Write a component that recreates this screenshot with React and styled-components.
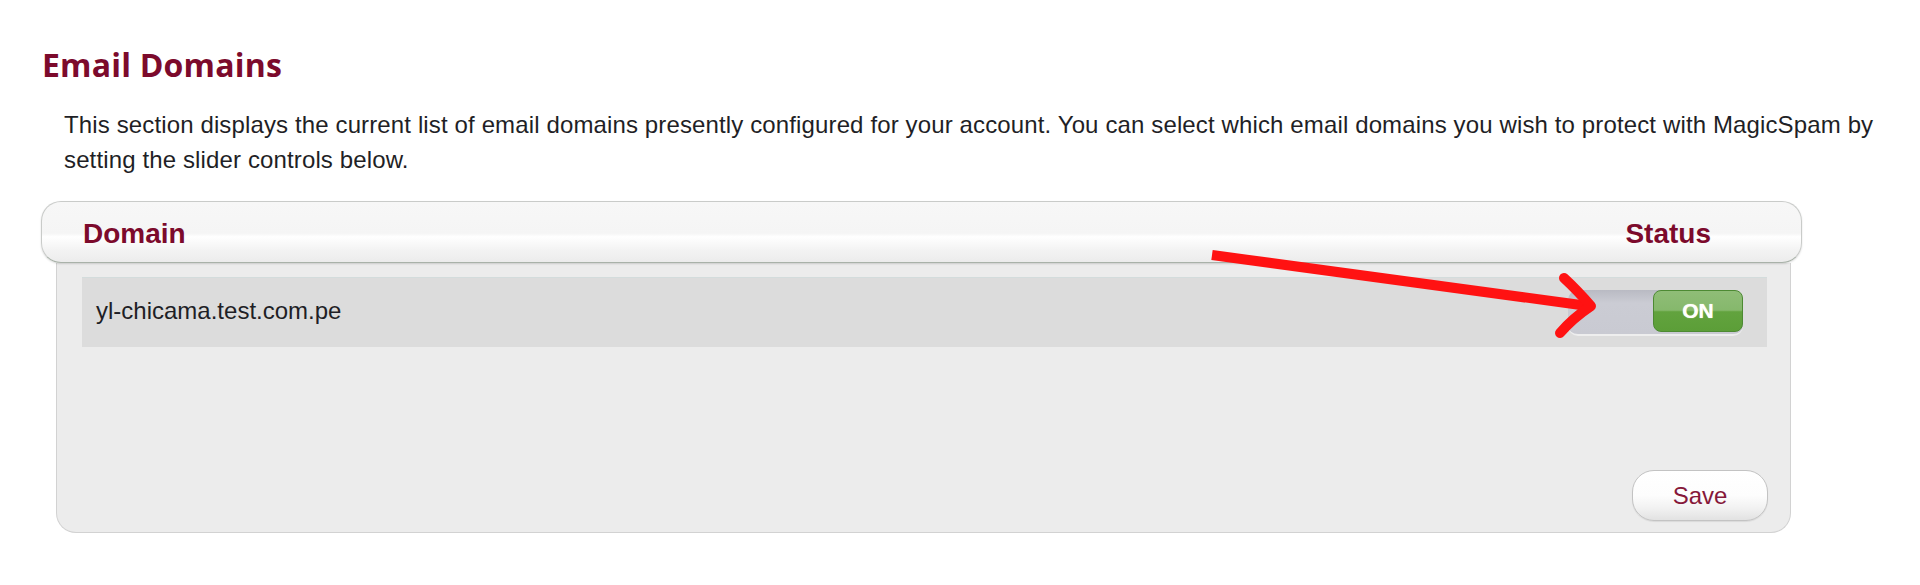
import React from 'react';
import styled, { createGlobalStyle } from 'styled-components';

const maroon = '#7c0a2c';
const ink = '#1f1f26';

const GlobalStyle = createGlobalStyle`
  html, body {
    margin: 0;
    padding: 0;
    background: #ffffff;
  }
  body {
    font-family: "Liberation Sans", Arial, sans-serif;
  }
`;

const Page = styled.div`
  position: relative;
  width: 1920px;
  height: 585px;
  box-sizing: border-box;
  padding: 46px 0 0 41px;
  overflow: hidden;
`;

const Title = styled.h2`
  margin: 0 0 0 1px;
  font-family: "Open Sans", "Noto Sans", sans-serif;
  font-weight: 700;
  font-size: 32px;
  line-height: 37px;
  letter-spacing: 0.2px;
  color: ${maroon};
`;

const Intro = styled.p`
  margin: 24px 0 0 23px;
  width: 1850px;
  font-size: 24px;
  line-height: 35px;
  letter-spacing: 0.13px;
  color: ${ink};
`;

const Table = styled.div`
  margin-top: 24px;
  width: 1761px;
`;

const HeaderBar = styled.div`
  height: 62px;
  box-sizing: border-box;
  display: flex;
  align-items: center;
  justify-content: space-between;
  padding: 3px 90px 0 41px;
  border: 1px solid #c9cbc9;
  border-bottom-color: #a9b2a9;
  border-radius: 20px;
  background: linear-gradient(#f7f7f7 0%, #f5f5f5 52%, #ffffff 58%, #f3f3f3 80%, #ececec 100%);
  box-shadow: 0 1px 2px rgba(0, 0, 0, 0.14);
  position: relative;
  z-index: 1;
`;

const HeadCell = styled.span`
  font-size: 28px;
  font-weight: 700;
  color: ${maroon};
`;

const Body = styled.div`
  margin: 0 11px 0 15px;
  height: 270px;
  box-sizing: border-box;
  display: flex;
  flex-direction: column;
  padding: 14px 23px 11px 25px;
  background: #ececec;
  border: 1px solid #d2d2d2;
  border-top: none;
  border-radius: 0 0 20px 20px;
`;

const Row = styled.div`
  height: 70px;
  box-sizing: border-box;
  display: flex;
  align-items: center;
  justify-content: space-between;
  padding: 0 24px 3px 14px;
  background: #dcdcdc;
  border-top: 1px solid #d3dcdc;
`;

const DomainName = styled.span`
  font-size: 24px;
  color: ${ink};
`;

const Track = styled.div`
  width: 175px;
  height: 46px;
  box-sizing: border-box;
  display: flex;
  justify-content: flex-end;
  align-items: center;
  border-radius: 10px;
  background: linear-gradient(#b9bac3 0%, #cbccd4 30%, #c9cad2 100%);
  border-bottom: 2px solid #eeeeee;
  margin-top: 4px;
`;

const Knob = styled.div`
  width: 90px;
  height: 42px;
  box-sizing: border-box;
  display: flex;
  align-items: center;
  justify-content: center;
  border-radius: 8px;
  border: 1px solid #4d8a33;
  background: linear-gradient(#8fbd77 0%, #86b86c 48%, #62a33e 52%, #5c9e38 100%);
  color: #ffffff;
  font-size: 21px;
  font-weight: 700;
  text-shadow: 0 0 1px rgba(255, 255, 210, 0.9);
  margin-top: -2px;
`;

const Footer = styled.div`
  margin-top: auto;
  display: flex;
  justify-content: flex-end;
`;

const SaveButton = styled.button`
  width: 136px;
  height: 51px;
  margin-right: -1px;
  border-radius: 22px;
  border: 1px solid #c3c3c3;
  background: linear-gradient(#ffffff 0%, #fdfdfd 50%, #f2f2f2 75%, #e2e2e2 100%);
  box-shadow: 0 1px 1px rgba(0, 0, 0, 0.08);
  font-family: "Liberation Sans", Arial, sans-serif;
  font-size: 24px;
  color: #86183a;
  padding: 0;
  cursor: pointer;
`;

const Overlay = styled.svg`
  position: absolute;
  left: 0;
  top: 0;
  z-index: 2;
  pointer-events: none;
`;

function Arrow() {
  return (
    <Overlay width="1920" height="585" viewBox="0 0 1920 585">
      <path d="M1212 255 L1588 306" stroke="#ff1212" strokeWidth="10" fill="none" />
      <path
        d="M1564 278 Q1577 290 1591 306 Q1573 318 1560 333"
        stroke="#ff1212"
        strokeWidth="10"
        strokeLinecap="round"
        strokeLinejoin="round"
        fill="none"
      />
    </Overlay>
  );
}

export default function App() {
  return (
    <>
      <GlobalStyle />
      <Page>
        <Title>Email Domains</Title>
        <Intro>
          This section displays the current list of email domains presently configured for your account. You can select which email domains you wish to protect with MagicSpam by setting the slider controls below.
        </Intro>
        <Table>
          <HeaderBar>
            <HeadCell>Domain</HeadCell>
            <HeadCell>Status</HeadCell>
          </HeaderBar>
          <Body>
            <Row>
              <DomainName>yl-chicama.test.com.pe</DomainName>
              <Track>
                <Knob>ON</Knob>
              </Track>
            </Row>
            <Footer>
              <SaveButton>Save</SaveButton>
            </Footer>
          </Body>
        </Table>
        <Arrow />
      </Page>
    </>
  );
}
